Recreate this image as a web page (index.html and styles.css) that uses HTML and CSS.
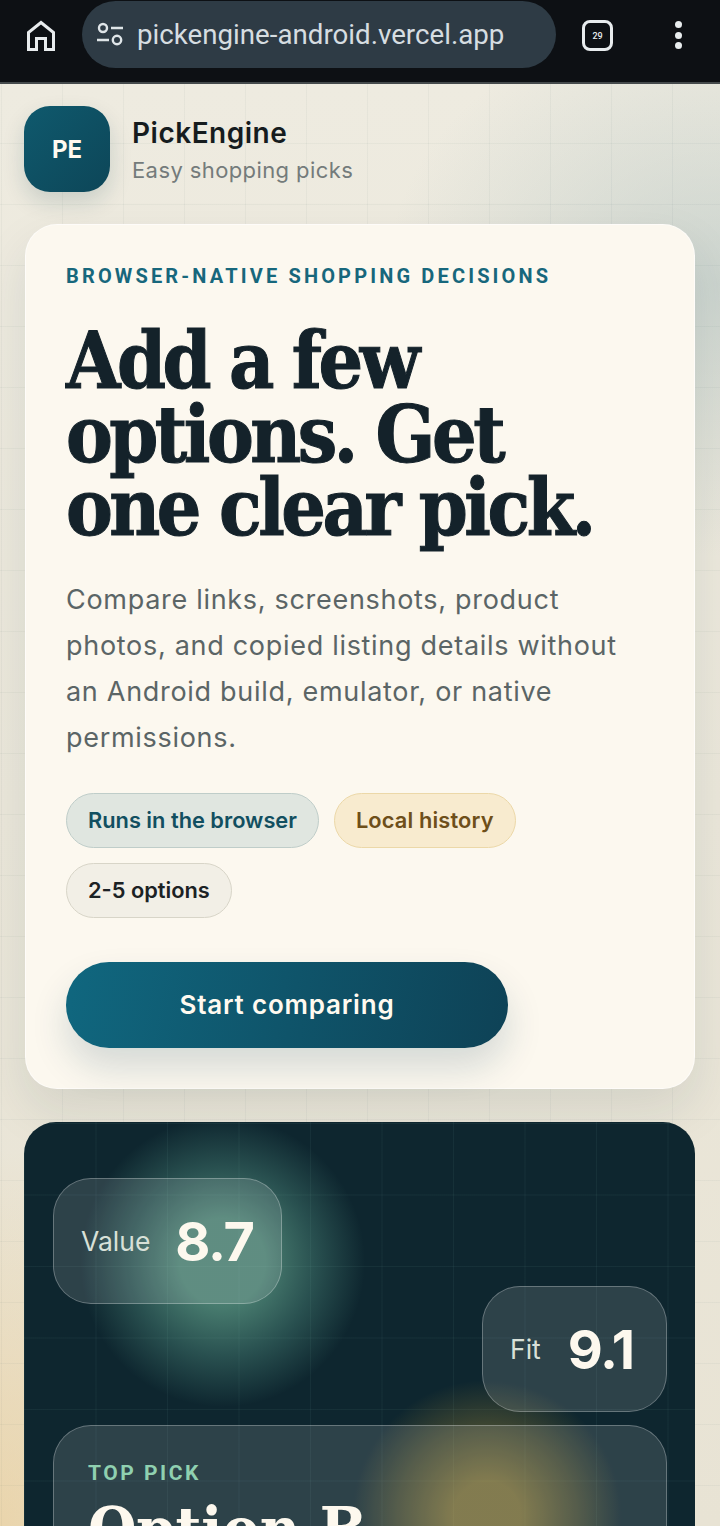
FILE: index.html
```html
<!DOCTYPE html>
<html lang="en">
<head>
<meta charset="utf-8">
<title>PickEngine</title>
<link rel="stylesheet" href="styles.css">
</head>
<body>
<div class="chrome">
  <svg class="home" viewBox="0 0 30 32" width="30" height="32"><path d="M2.5 29.5V12.5L15 2.5L27.5 12.5V29.5H19.5V18.5H10.5V29.5Z" fill="none" stroke="#e8ecee" stroke-width="3" stroke-linejoin="miter"/></svg>
  <div class="url">
    <svg class="tune" viewBox="0 0 28 26" width="28" height="26"><circle cx="7" cy="6" r="4" fill="none" stroke="#dfe5e8" stroke-width="2.4"/><path d="M15 6H27M1 18H13" stroke="#dfe5e8" stroke-width="2.6" fill="none"/><circle cx="21" cy="18" r="4.2" fill="none" stroke="#dfe5e8" stroke-width="2.4"/></svg>
    <span class="url-text">pickengine-android.vercel.app</span>
  </div>
  <div class="tabs"><span>29</span></div>
  <div class="dots"><i></i><i></i><i></i></div>
</div>
<main class="page">
  <header class="brand">
    <div class="logo">PE</div>
    <div class="brand-text">
      <div class="brand-name">PickEngine</div>
      <div class="brand-sub">Easy shopping picks</div>
    </div>
  </header>
  <section class="hero">
    <p class="eyebrow">BROWSER-NATIVE SHOPPING DECISIONS</p>
    <h1>Add a few options. Get one clear pick.</h1>
    <p class="lede">Compare links, screenshots, product photos, and copied listing details without an Android build, emulator, or native permissions.</p>
    <div class="chips">
      <span class="chip chip-teal">Runs in the browser</span>
      <span class="chip chip-amber">Local history</span>
      <span class="chip chip-plain">2-5 options</span>
    </div>
    <button class="cta">Start comparing</button>
  </section>
  <section class="panel">
    <div class="glow glow-green"></div>
    <div class="glow glow-gold"></div>
    <div class="stat stat-value"><span class="stat-label">Value</span><span class="stat-num">8.7</span></div>
    <div class="stat stat-fit"><span class="stat-label">Fit</span><span class="stat-num">9.1</span></div>
    <div class="pick">
      <p class="pick-label">TOP PICK</p>
      <h2>Option B</h2>
    </div>
  </section>
</main>
</body>
</html>
```
FILE: styles.css
```css
* { box-sizing: border-box; }
html, body { margin: 0; height: 1526px; overflow: hidden; }
body {
  font-family: "Inter", "Liberation Sans", sans-serif;
  background: #ebe6d8;
  color: #151d20;
}
.chrome {
  height: 84px;
  background: #0d1014;
  border-bottom: 2px solid #454a4c;
  display: flex;
  align-items: flex-start;
  padding: 1px 0 0 26px;
}
.home { margin-top: 19px; }
.url {
  margin-left: 26px;
  width: 474px;
  height: 67px;
  border-radius: 34px;
  background: #2e3b45;
  display: flex;
  align-items: center;
  padding-left: 14px;
}
.url-text {
  margin-left: 13px;
  font-family: "Roboto", sans-serif;
  font-size: 27.7px;
  color: #d6dde1;
  white-space: nowrap;
}
.tabs {
  margin: 19px 0 0 26px;
  width: 31px;
  height: 31px;
  border: 3px solid #e8ecee;
  border-radius: 8px;
  display: flex;
  align-items: center;
  justify-content: center;
  font: 500 9px "Roboto", sans-serif;
  color: #e8ecee;
}
.dots {
  margin: 20px 0 0 62px;
  display: flex;
  flex-direction: column;
  gap: 3.5px;
}
.dots i { display: block; width: 7px; height: 7px; border-radius: 50%; background: #e8ecee; }
.page {
  height: 1442px;
  overflow: hidden;
  padding: 22px 25px 0 24px;
  background-color: #eae6da;
  background-image:
    linear-gradient(rgba(20,60,70,.04) 1px, transparent 1px),
    linear-gradient(90deg, rgba(20,60,70,.04) 1px, transparent 1px),
    radial-gradient(420px 340px at 100% 200px, rgba(170,190,190,.5), transparent 80%),
    radial-gradient(320px 500px at 0% 100%, rgba(235,205,150,.65), transparent 75%),
    linear-gradient(180deg, #eeebe0, #e8e3d4);
  background-size: 61px 61px, 61px 61px, auto, auto, auto;
  background-position: 1px -2px, 1px -2px, 0 0, 0 0, 0 0;
}
.brand { display: flex; align-items: flex-start; gap: 22px; height: 118px; }
.logo {
  width: 86px;
  height: 86px;
  border-radius: 26px;
  background: linear-gradient(135deg, #0f596d, #0d4658);
  color: #fffaf0;
  font-family: "Inter", sans-serif;
  font-weight: 700;
  font-size: 24px;
  display: flex;
  align-items: center;
  justify-content: center;
  box-shadow: 0 10px 22px rgba(15,60,75,.16);
}
.brand-text { padding-top: 9px; }
.brand-name { font-size: 28px; line-height: 36px; font-weight: 600; color: #161c1e; letter-spacing: .5px; }
.brand-sub { font-size: 22px; line-height: 36px; color: #747b7b; margin-top: 1px; letter-spacing: .4px; }
.hero {
  margin-left: 1px;
  height: 865px;
  border-radius: 32px;
  background: #fcf8ef;
  border: 1px solid rgba(255,255,255,.6);
  padding: 37px 40px 0 40px;
  box-shadow: 0 22px 50px rgba(20,50,60,.1);
}
.eyebrow {
  margin: 0;
  font-family: "Roboto", sans-serif;
  font-size: 20px;
  line-height: 28px;
  font-weight: 700;
  letter-spacing: 3.15px;
  color: #17677c;
}
h1 {
  margin: 34px 0 0;
  font-family: "DejaVu Serif Condensed", "DejaVu Serif", serif;
  font-weight: 700;
  font-size: 78px;
  line-height: 73.5px;
  letter-spacing: -3.5px;
  color: #14222a;
  -webkit-text-stroke: 1px #14222a;
}
.lede {
  margin: 32px 0 0;
  max-width: 575px;
  font-size: 27px;
  line-height: 46px;
  letter-spacing: .7px;
  color: #5b6566;
}
.chips { display: flex; flex-wrap: wrap; gap: 15px; margin-top: 32px; }
.chip {
  height: 55px;
  padding: 0 21px;
  border-radius: 28px;
  font-size: 21.8px;
  font-weight: 600;
  display: inline-flex;
  align-items: center;
  border: 1px solid;
}
.chip-teal { background: #e0e6e0; border-color: #bfcdc9; color: #124f60; }
.chip-amber { background: #f8ebcf; border-color: #ecd8a8; color: #6e4f1a; letter-spacing: .15px; }
.chip-plain { background: #f2efe6; border-color: #d8d5c8; color: #1c2224; }
.cta {
  display: block;
  margin-top: 44px;
  width: 442px;
  height: 86px;
  border: 0;
  border-radius: 43px;
  background: linear-gradient(100deg, #10677f, #0e4256);
  color: #fffaf0;
  font: 600 26px "Inter", sans-serif;
  letter-spacing: .8px;
  box-shadow: 0 20px 36px rgba(15,65,85,.16);
}
.panel {
  position: relative;
  margin-top: 33px;
  height: 520px;
  border-radius: 32px;
  overflow: hidden;
  background-color: #0e262f;
  background-image:
    linear-gradient(rgba(130,190,180,.07) 1px, transparent 1px),
    linear-gradient(90deg, rgba(130,190,180,.07) 1px, transparent 1px);
  background-size: 71.5px 71.5px;
  background-position: 0 1px;
  padding: 56px 28px 0 29px;
}
.glow { position: absolute; border-radius: 50%; }
.glow-green {
  left: 56px; top: -5px; width: 285px; height: 290px;
  background: radial-gradient(closest-side, rgba(130,210,175,.5) 30%, rgba(110,190,165,.28) 65%, transparent);
}
.glow-gold {
  left: 328px; top: 258px; width: 270px; height: 270px;
  background: radial-gradient(closest-side, rgba(210,170,60,.5) 25%, rgba(190,155,55,.28) 65%, transparent);
}
.stat {
  position: relative;
  display: flex;
  align-items: center;
  gap: 25px;
  height: 126px;
  padding: 0 27px;
  border-radius: 38px;
  background: rgba(255,255,255,.13);
  border: 1px solid rgba(255,255,255,.28);
}
.stat-value { width: 229px; }
.stat-fit { width: 185px; margin: -18px 0 0 auto; gap: 27px; }
.stat-label { font-size: 26.5px; color: #d8e0d8; }
.stat-num { font-size: 54px; font-weight: 700; color: #fdf8ee; letter-spacing: -1.3px; }
.pick {
  position: relative;
  margin-top: 13px;
  height: 200px;
  border-radius: 38px;
  background: rgba(255,255,255,.13);
  border: 1px solid rgba(255,255,255,.28);
  padding: 32px 34px;
}
.pick-label { margin: 0; font-family: "Roboto", sans-serif; font-size: 21px; line-height: 30px; font-weight: 700; letter-spacing: 2.5px; color: #8fd0b0; }
h2 { margin: 12px 0 0; font-family: "DejaVu Serif Condensed", "DejaVu Serif", serif; font-size: 62px; line-height: 60px; font-weight: 700; color: #fdf8ee; }
```
